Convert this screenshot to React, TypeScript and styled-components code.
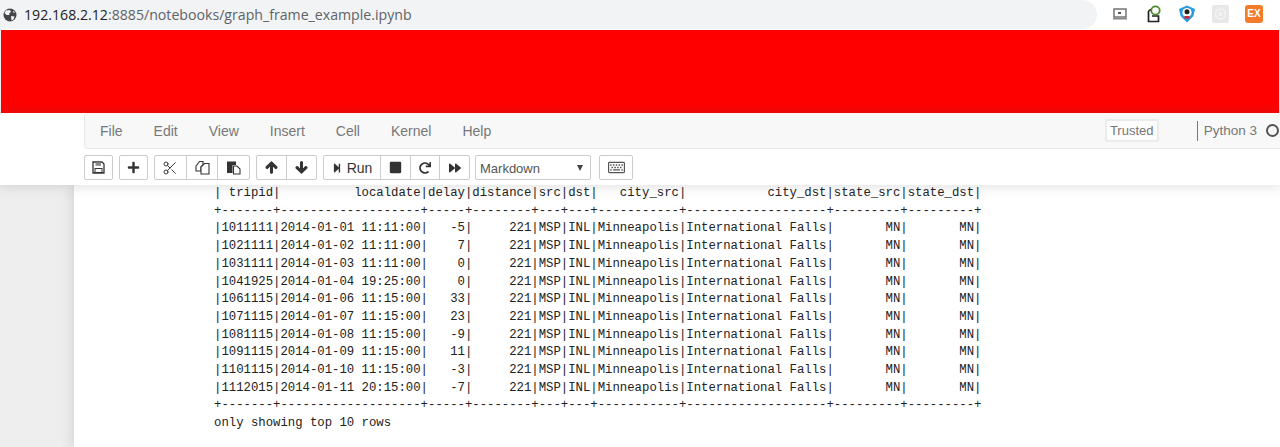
import React from 'react';
import styled, { createGlobalStyle } from 'styled-components';
import { FaPlus, FaArrowUp, FaArrowDown, FaStepForward, FaStop, FaRedo, FaForward, FaRegKeyboard } from 'react-icons/fa';
import { Scissors } from 'lucide-react';

const GlobalStyle = createGlobalStyle`
  html, body {
    margin: 0;
    height: 447px;
    overflow: hidden;
    background: #eeeeee;
    font-family: "Liberation Sans", Arial, sans-serif;
  }
`;

const menuItems = ['File', 'Edit', 'View', 'Insert', 'Cell', 'Kernel', 'Help'];

const sep = '+-------+-------------------+-----+--------+---+---+-----------+-------------------+---------+---------+';
const head = '| tripid|          localdate|delay|distance|src|dst|   city_src|           city_dst|state_src|state_dst|';

const rows = [
  ['1011111', '2014-01-01 11:11:00', '-5'],
  ['1021111', '2014-01-02 11:11:00', '7'],
  ['1031111', '2014-01-03 11:11:00', '0'],
  ['1041925', '2014-01-04 19:25:00', '0'],
  ['1061115', '2014-01-06 11:15:00', '33'],
  ['1071115', '2014-01-07 11:15:00', '23'],
  ['1081115', '2014-01-08 11:15:00', '-9'],
  ['1091115', '2014-01-09 11:15:00', '11'],
  ['1101115', '2014-01-10 11:15:00', '-3'],
  ['1112015', '2014-01-11 20:15:00', '-7'],
];

const tableText = [
  head,
  sep,
  ...rows.map(
    ([id, date, delay]) =>
      `|${id}|${date}|${delay.padStart(5)}|     221|MSP|INL|Minneapolis|International Falls|       MN|       MN|`,
  ),
  sep,
  'only showing top 10 rows',
].join('\n');

const SaveIcon = () => (
  <svg width="13" height="13" viewBox="0 0 13 13">
    <path d="M1 1 H10 L12 3 V12 H1 Z" fill="#fff" stroke="#333" strokeWidth="1.3" />
    <rect x="3.5" y="1.4" width="5.5" height="3.4" fill="#8a8a8a" />
    <rect x="3" y="7.5" width="7" height="4" fill="#fff" stroke="#333" strokeWidth="1" />
  </svg>
);

const CopyIcon = () => (
  <svg width="15" height="15" viewBox="0 0 15 15">
    <path d="M1 6 L4.5 1.5 H8 V5 L6 7 V11 H1 Z" fill="#fff" stroke="#333" strokeWidth="1.1" />
    <path d="M6 7 L9.5 3.5 H14 V14 H6 Z" fill="#fff" stroke="#333" strokeWidth="1.1" />
  </svg>
);

const PasteIcon = () => (
  <svg width="15" height="15" viewBox="0 0 15 15">
    <path d="M1 1.5 H10 V5 H6.5 V13 H1 Z" fill="#333" />
    <path d="M7.5 6 H11 L14 9 V14 H7.5 Z" fill="#fff" stroke="#333" strokeWidth="1.1" />
  </svg>
);

const App = () => (
  <>
    <GlobalStyle />
    <Chrome>
      <AddressBar>
        <svg width="14" height="14" viewBox="0 0 14 14">
          <circle cx="7" cy="7" r="6.5" fill="#44474a" />
          <path d="M3 2.5 L7 2 L8 4 L6 5.5 L6.5 7 L3.5 7 L1.5 5 Z M8 8 L11.5 8.5 L10.5 11.5 L8.5 12.5 Z M10 2.5 L12 4.5 L10.5 5 Z" fill="#f1f3f4" />
        </svg>
        <Url><b>192.168.2.12</b>:8885/notebooks/graph_frame_example.ipynb</Url>
      </AddressBar>
      <Extensions>
        <svg width="17" height="12" viewBox="0 0 17 12">
          <rect x="1" y="1" width="12" height="8" fill="#fff" stroke="#6a6a6a" strokeWidth="1.4" />
          <rect x="5" y="4" width="3" height="2" fill="#555" />
          <rect x="0" y="10" width="14" height="1.5" fill="#888" />
        </svg>
        <svg width="16" height="18" viewBox="0 0 16 18">
          <path d="M2.5 6 L2.5 16.5 L12.5 16.5 L12.5 11 L6 11 M2.5 6 L6 4" fill="none" stroke="#222" strokeWidth="1.7" />
          <circle cx="9.5" cy="5.5" r="4.2" fill="#fff" stroke="#4a8a2a" strokeWidth="1.8" />
        </svg>
        <svg width="18" height="18" viewBox="0 0 18 18">
          <path d="M9 0.5 L17 4 L15.5 11 L9 17.5 L2.5 11 L1 4 Z" fill="#2b9be0" />
          <circle cx="9" cy="7.5" r="4.6" fill="#fff" />
          <circle cx="9" cy="6.8" r="2.5" fill="#222" />
          <rect x="6.5" y="11" width="5" height="2.6" fill="#d8262c" />
        </svg>
        <svg width="17" height="18" viewBox="0 0 17 18">
          <rect width="17" height="18" rx="2" fill="#e8e8e8" />
          <circle cx="8.5" cy="9" r="5" fill="none" stroke="#f4f4f4" strokeWidth="1.5" />
          <circle cx="8.5" cy="9" r="2" fill="#f4f4f4" />
        </svg>
        <ExBadge>EX</ExBadge>
      </Extensions>
    </Chrome>
    <RedBanner />
    <NotebookHeader>
      <MenuBar>
        <Menu>
          {menuItems.map(item => (
            <MenuItem key={item}>{item}</MenuItem>
          ))}
        </Menu>
        <Trusted>Trusted</Trusted>
        <Kernel>Python 3</Kernel>
        <KernelDot />
      </MenuBar>
      <Toolbar>
        <BtnGroup $w={29}><Btn><SaveIcon /></Btn></BtnGroup>
        <BtnGroup $w={29}><Btn><FaPlus size={13} /></Btn></BtnGroup>
        <BtnGroup $w={96}>
          <Btn><Scissors size={16} strokeWidth={1.4} /></Btn>
          <Btn><CopyIcon /></Btn>
          <Btn><PasteIcon /></Btn>
        </BtnGroup>
        <BtnGroup $w={61}>
          <Btn><FaArrowUp size={13} stroke="currentColor" strokeWidth={40} /></Btn>
          <Btn><FaArrowDown size={13} stroke="currentColor" strokeWidth={40} /></Btn>
        </BtnGroup>
        <BtnGroup $w={147}>
          <RunBtn><FaStepForward size={10} /> Run</RunBtn>
          <Btn><FaStop size={13} /></Btn>
          <Btn><FaRedo size={12} /></Btn>
          <Btn><FaForward size={12} /></Btn>
        </BtnGroup>
        <CellType>
          Markdown
          <Caret />
        </CellType>
        <KeyboardBtn $w={34}><FaRegKeyboard size={17} /></KeyboardBtn>
      </Toolbar>
    </NotebookHeader>
    <Site>
      <Notebook>
        <Output>{tableText}</Output>
      </Notebook>
    </Site>
  </>
);

export default App;

const Chrome = styled.div`
  display: flex;
  height: 30px;
  background: #fff;
`;

const AddressBar = styled.div`
  width: 1097px;
  height: 29px;
  box-sizing: border-box;
  padding-left: 3px;
  display: flex;
  align-items: center;
  gap: 7px;
  background: #f1f3f4;
  border-radius: 0 15px 15px 0;
`;

const Url = styled.span`
  font-family: "Open Sans", sans-serif;
  font-size: 14.15px;
  color: #5f6368;
  white-space: nowrap;

  b {
    font-weight: 400;
    color: #202124;
  }
`;

const Extensions = styled.div`
  flex: 1;
  display: flex;
  align-items: center;
  gap: 16px;
  padding: 0 0 3px 16px;
`;

const ExBadge = styled.span`
  width: 18px;
  height: 18px;
  border-radius: 3px;
  background: #f47b2a;
  color: #fff;
  font-size: 10px;
  font-weight: 700;
  text-align: center;
  line-height: 18px;
`;

const RedBanner = styled.div`
  height: 83px;
  margin: 0 1px;
  background: #ff0000;
`;

const NotebookHeader = styled.div`
  position: relative;
  z-index: 1;
  height: 72px;
  padding-left: 84px;
  background: #fff;
  box-shadow: 0 0 12px 1px rgba(87, 87, 87, 0.2);
`;

const MenuBar = styled.div`
  display: flex;
  align-items: center;
  height: 36px;
  box-sizing: border-box;
  background: #f8f8f8;
  border: 1px solid #e7e7e7;
  border-width: 0 0 1px 1px;
  border-radius: 4px 0 0 4px;
  overflow: hidden;
`;

const Menu = styled.div`
  display: flex;
  flex: 1;
  gap: 31px;
  padding-left: 15px;
`;

const MenuItem = styled.span`
  font-size: 14px;
  color: #777;
`;

const Trusted = styled.span`
  box-sizing: border-box;
  width: 54px;
  height: 23px;
  text-align: center;
  line-height: 20px;
  font-size: 13px;
  color: #777;
  background: #fcfcfc;
  border: 2px solid #ececec;
  border-radius: 2px;
`;

const Kernel = styled.span`
  margin-left: 38px;
  padding-left: 6px;
  border-left: 1px solid #777;
  font-size: 13.5px;
  line-height: 20px;
  color: #777;
`;

const KernelDot = styled.span`
  flex: none;
  width: 9px;
  height: 9px;
  margin: 0 1px 0 9px;
  border: 2px solid #555;
  border-radius: 50%;
`;

const Toolbar = styled.div`
  display: flex;
  align-items: center;
  gap: 6px;
  height: 36px;
  padding-top: 1px;
  box-sizing: border-box;
`;

const BtnGroup = styled.div<{ $w: number }>`
  display: flex;
  width: ${props => props.$w}px;
  height: 25px;
  border: 1px solid #ccc;
  border-radius: 2px;
  box-sizing: border-box;
`;

const Btn = styled.span`
  flex: 1;
  display: flex;
  align-items: center;
  justify-content: center;
  color: #333;

  & + & {
    border-left: 1px solid #ccc;
  }
`;

const RunBtn = styled(Btn)`
  flex: none;
  width: 56px;
  gap: 5px;
  font-size: 14px;
`;

const CellType = styled.div`
  position: relative;
  box-sizing: border-box;
  width: 116px;
  height: 25px;
  margin-left: -1px;
  padding-left: 4px;
  line-height: 25px;
  font-size: 13px;
  color: #555;
  border: 1px solid #ccc;
  border-radius: 2px;
`;

const Caret = styled.span`
  position: absolute;
  top: 9px;
  right: 7px;
  border-left: 3.5px solid transparent;
  border-right: 3.5px solid transparent;
  border-top: 6px solid #444;
`;

const KeyboardBtn = styled(BtnGroup)`
  margin-left: 2px;
  align-items: center;
  justify-content: center;
  color: #555;
`;

const Site = styled.div`
  height: 262px;
  padding-left: 74px;
  overflow: hidden;
`;

const Notebook = styled.div`
  height: 100%;
  padding-left: 140px;
  background: #fff;
  box-shadow: 0 0 12px 1px rgba(87, 87, 87, 0.2);
`;

const Output = styled.pre`
  margin: 0;
  font-family: "Liberation Mono", monospace;
  font-size: 12.3px;
  line-height: 17.7px;
  color: #222;
`;
